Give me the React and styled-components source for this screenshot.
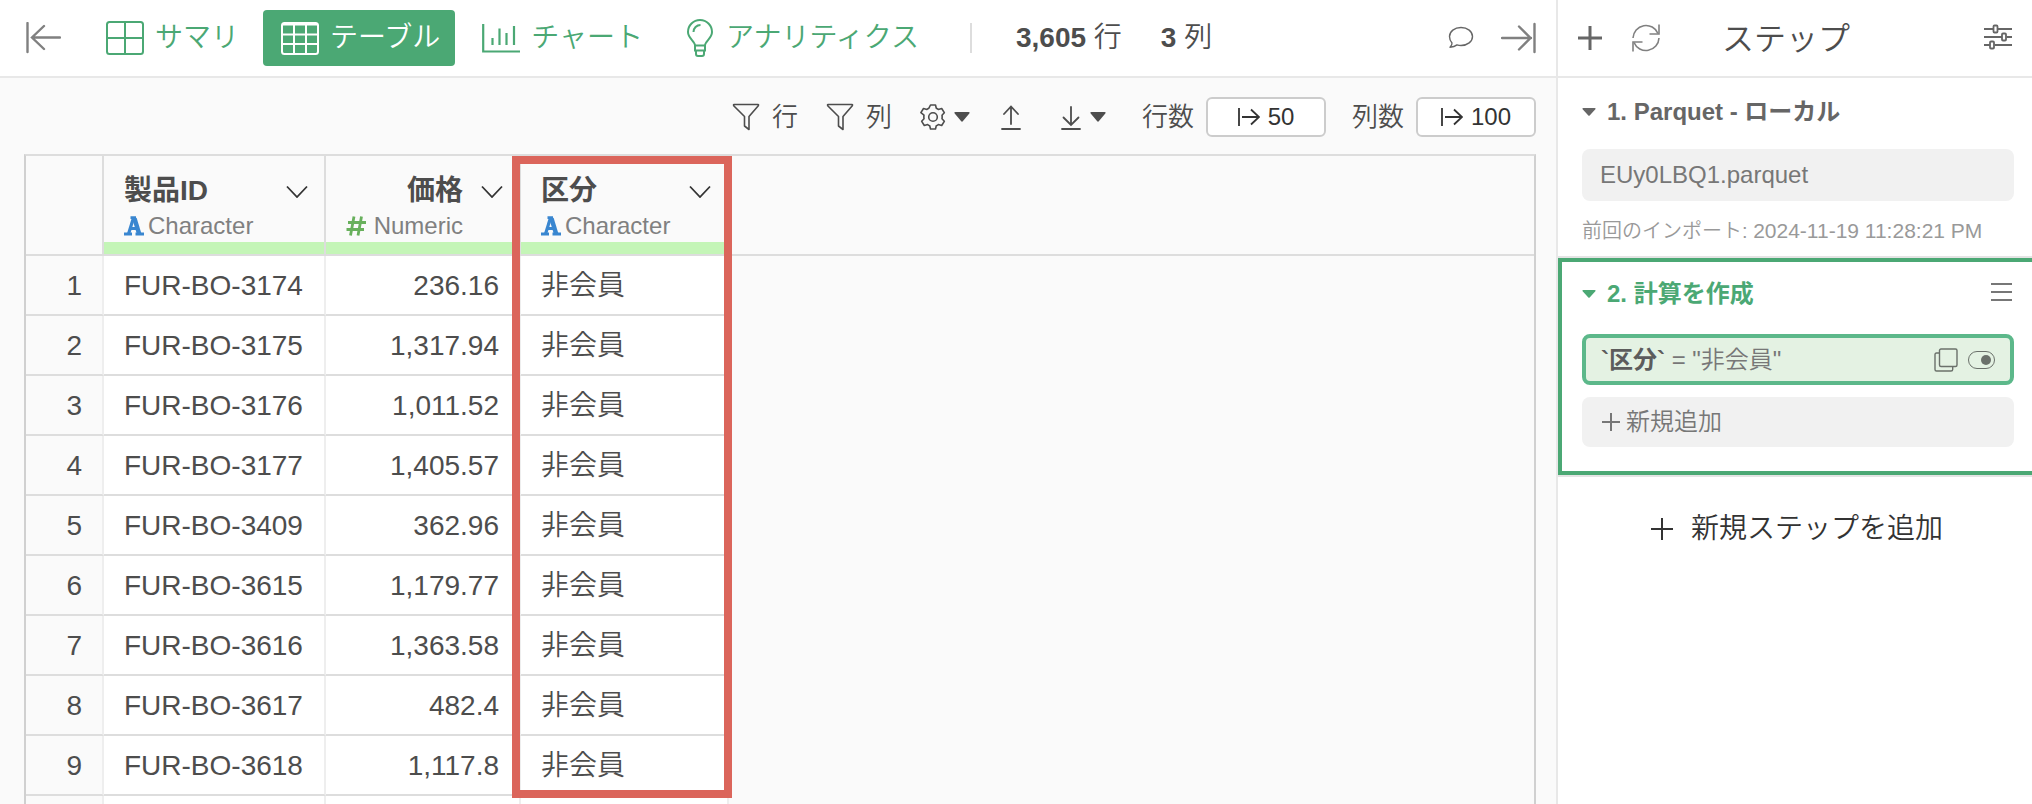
import { useState } from "react";
import styled, { createGlobalStyle } from "styled-components";

/* ---------------- STYLES ---------------- */

const GlobalStyle = createGlobalStyle`
  * {
    box-sizing: border-box;
  }

  body {
    margin: 0;
    background-color: #ffffff;
  }

  body, button, input {
    font-family: "Liberation Sans", "Noto Sans CJK JP", sans-serif;
    font-weight: 350;
  }

  b {
    font-weight: 700;
  }

  button {
    margin: 0;
    padding: 0;
    border: 0;
    background: none;
    color: inherit;
    cursor: pointer;
  }

  svg {
    display: block;
    flex-shrink: 0;
  }
`;

const Container = styled.div`
  display: flex;
  height: 100vh;
  overflow: hidden;
  color: #4d4d4d;
`;

const Main = styled.main`
  flex: 1;
  min-width: 0;
  display: flex;
  flex-direction: column;
  background-color: #fafafa;
`;

const TopBar = styled.header`
  display: flex;
  align-items: center;
  height: 78px;
  flex-shrink: 0;
  padding: 0 20px 0 26px;
  background-color: #ffffff;
  border-bottom: 2px solid #e8e8e8;
`;

const IconButton = styled.button`
  display: flex;
  align-items: center;
  gap: ${({ $gap }) => $gap || 0}px;
  color: ${({ $color }) => $color || "#4d4d4d"};
`;

const Tabs = styled.nav`
  display: flex;
  gap: 9px;
  margin-left: 27px;
`;

const Tab = styled.button`
  display: flex;
  align-items: center;
  gap: 11px;
  height: 56px;
  padding: 0 15px 0 18px;
  border-radius: 4px;
  font-size: 28px;
  line-height: 40px;
  white-space: nowrap;
  color: ${({ $active }) => ($active ? "#ffffff" : "#4ba874")};
  background-color: ${({ $active }) => ($active ? "#4ba874" : "transparent")};
`;

const Counts = styled.div`
  display: flex;
  align-items: center;
  gap: 39px;
  height: 30px;
  margin-left: 36px;
  padding-left: 44px;
  border-left: 2px solid #dddddd;
  font-size: 28px;
  line-height: 40px;
  white-space: nowrap;
`;

const TopActions = styled.div`
  display: flex;
  align-items: center;
  gap: 27px;
  margin-left: auto;
`;

const ToolBar = styled.div`
  display: flex;
  align-items: center;
  justify-content: flex-end;
  gap: 28px;
  height: 76px;
  flex-shrink: 0;
  padding: 2px 20px 0 24px;
`;

const FilterButton = styled(IconButton)`
  gap: 12px;
  font-size: 26px;
  line-height: 40px;
`;

const Sizes = styled.div`
  display: flex;
  gap: 26px;
  margin-left: 8px;
`;

const SizeField = styled.div`
  display: flex;
  align-items: center;
  gap: 12px;
  font-size: 26px;
  line-height: 40px;
  white-space: nowrap;
`;

const SizeButton = styled.button`
  display: flex;
  align-items: center;
  justify-content: center;
  gap: 8px;
  width: 120px;
  height: 40px;
  border: 2px solid #cccccc;
  border-radius: 6px;
  background-color: #ffffff;
  color: #333333;
  font-size: 24px;
`;

const GridWrap = styled.div`
  flex: 1;
  min-height: 0;
  margin: 0 20px 0 24px;
  overflow: hidden;
  border: 2px solid #dddddd;
  border-left-color: #d0d0d0;
  border-right-color: #d0d0d0;
  border-bottom: 0;
`;

const Grid = styled.table`
  width: 100%;
  table-layout: fixed;
  border-collapse: separate;
  border-spacing: 0;
`;

const Col = styled.col`
  width: ${({ $width }) => $width};
`;

const HeadCell = styled.th`
  position: relative;
  height: 100px;
  padding: 0;
  vertical-align: top;
  text-align: left;
  font-weight: 350;
  border-right: ${({ $last }) => ($last ? 0 : 2)}px solid #dddddd;
  border-bottom: 2px solid #dddddd;
`;

const HeadBody = styled.div`
  display: flex;
  flex-direction: column;
  height: 98px;
  padding: 15px 16px 0 20px;
  border-bottom: 12px solid #c4f5b7;
`;

const HeadTitle = styled.div`
  display: flex;
  align-items: center;
  justify-content: ${({ $right }) => ($right ? "flex-end" : "space-between")};
  gap: 18px;
  font-size: 28px;
  font-weight: 700;
  line-height: 40px;
`;

const HeadType = styled.div`
  display: flex;
  align-items: center;
  gap: ${({ $right }) => ($right ? 8 : 4)}px;
  padding-right: ${({ $right }) => ($right ? 40 : 0)}px;
  justify-content: ${({ $right }) => ($right ? "flex-end" : "flex-start")};
  color: #808080;
  font-size: 24px;
  line-height: 30px;
`;

const RowNumber = styled.th`
  height: 60px;
  padding: 2px 20px 0 0;
  text-align: right;
  font-size: 28px;
  line-height: 40px;
  font-weight: 350;
  border-right: 2px solid #eeeeee;
  border-bottom: 2px solid #dddddd;
`;

const Cell = styled.td`
  height: 60px;
  padding: 2px 20px 0;
  font-size: 28px;
  line-height: 40px;
  white-space: nowrap;
  text-align: ${({ $right }) => ($right ? "right" : "left")};
  background-color: #ffffff;
  border-right: 2px solid #eeeeee;
  border-bottom: 2px solid #dddddd;
`;

const Highlight = styled.span`
  position: absolute;
  z-index: 2;
  top: 0;
  left: -9px;
  right: -5px;
  height: 642px;
  border: 8px solid #db655b;
  pointer-events: none;
`;

const StepPanel = styled.aside`
  width: 476px;
  flex-shrink: 0;
  border-left: 2px solid #e8e8e8;
  background-color: #ffffff;
`;

const PanelHeader = styled.header`
  display: flex;
  align-items: center;
  gap: 30px;
  height: 78px;
  padding: 0 20px;
  border-bottom: 2px solid #e8e8e8;
`;

const PanelTitle = styled.h1`
  flex: 1;
  margin: 0;
  padding: 2px 0 0 32px;
  font-size: 32px;
  font-weight: 350;
  line-height: 40px;
`;

const Step = styled.section`
  padding: ${({ $active }) => ($active ? "12px 18px 24px 20px" : "14px 18px 10px 24px")};
  border: 0 solid #4ba874;
  border-width: ${({ $active }) => ($active ? "4px 0 4px 4px" : "0")};
  box-shadow: 0 2px 0 #e4e4e4;
  margin-bottom: 2px;
`;

const StepHeading = styled.h2`
  display: flex;
  align-items: center;
  gap: 11px;
  margin: 0;
  height: 40px;
  color: ${({ $active }) => ($active ? "#4ba874" : "#666666")};
  font-size: 24px;
  font-weight: 700;
  line-height: 40px;
`;

const MenuButton = styled(IconButton)`
  margin-left: auto;
  padding: 0 2px 4px 0;
`;

const SourceBox = styled.button`
  display: block;
  width: 100%;
  height: 52px;
  margin-top: 17px;
  padding: 0 18px;
  border-radius: 8px;
  background-color: #f1f1f1;
  color: #777777;
  font-size: 24px;
  text-align: left;
`;

const ImportInfo = styled.p`
  margin: 16px 0 0;
  padding-bottom: 1px;
  color: #999999;
  font-size: 20px;
  line-height: 28px;
  white-space: nowrap;

  time {
    font-size: 21px;
  }
`;

const Formula = styled.div`
  display: flex;
  align-items: center;
  gap: 10px;
  height: 51px;
  margin-top: 20px;
  padding: 0 15px;
  border: 4px solid #5cb88a;
  border-radius: 8px;
  background-color: #e4f2e3;
  color: #777777;
  font-size: 24px;
  line-height: 36px;
`;

const FormulaText = styled.span`
  flex: 1;

  b {
    color: #5c5c5c;
  }
`;

const Toggle = styled.input`
  appearance: none;
  display: flex;
  align-items: center;
  justify-content: ${({ checked }) => (checked ? "flex-end" : "flex-start")};
  width: 27px;
  height: 18px;
  margin: 0;
  padding: 0 3px;
  border: 1px solid #6b716b;
  border-radius: 9px;
  cursor: pointer;

  &::before {
    content: "";
    width: 10px;
    height: 10px;
    border-radius: 5px;
    background-color: #6b716b;
  }
`;

const AddBox = styled.button`
  display: flex;
  align-items: center;
  gap: 6px;
  width: 100%;
  height: 50px;
  margin-top: 12px;
  padding: 0 20px;
  border-radius: 8px;
  background-color: #f1f1f1;
  color: #777777;
  font-size: 24px;
  line-height: 36px;
`;

const AddStep = styled.button`
  display: flex;
  align-items: center;
  justify-content: center;
  gap: 18px;
  width: 100%;
  margin-top: 34px;
  padding-left: 4px;
  color: #333333;
  font-size: 28px;
  line-height: 40px;
`;

/* ---------------- ICONS ---------------- */

const CollapseIcon = ({ flip }) => (
  <svg width="35" height="32" viewBox="0 0 35 32" fill="none" stroke="#808080" strokeWidth="2.4" strokeLinecap="round">
    {flip ? (
      <path d="M33.5 2v28M1 16h29M18 4.500l11.500 11.500L18 27.500" />
    ) : (
      <path d="M1.500 1v29M34 15.500H7M18 4L6 15.500L18 27" />
    )}
  </svg>
);

const SummaryIcon = () => (
  <svg width="38" height="34" viewBox="0 0 38 34" fill="none" stroke="currentColor" strokeWidth="2">
    <rect x="1" y="1" width="36" height="32" rx="2.500" />
    <path d="M19 1v32M1 17h36" />
  </svg>
);

const TableIcon = () => (
  <svg width="38" height="34" viewBox="0 0 38 34" fill="none" stroke="currentColor" strokeWidth="2">
    <rect x="1" y="2" width="36" height="31" rx="2.500" />
    <path d="M1 3.500h36M13 2v31M25 2v31M1 13.500h36M1 23h36" />
  </svg>
);

const ChartIcon = () => (
  <svg width="38" height="30" viewBox="0 0 38 30" fill="none" stroke="currentColor" strokeWidth="2.2">
    <path d="M1.200 1v27.500H38M10.500 15v7M17.500 5.500v16.500M24.500 10v12M32 3v19" />
  </svg>
);

const BulbIcon = () => (
  <svg width="30" height="38" viewBox="0 0 30 38" fill="none" stroke="currentColor" strokeWidth="2">
    <path d="M10 26.500c0-4.500-7-7-7-13.500a12 12 0 0 1 24 0c0 6.500-7 9-7 13.500zM10 26.500v5h10v-5M11 31.500v3.500q0 2 2 2h4q2 0 2-2v-3.500" />
    <path d="M8.500 13a7 7 0 0 1 7-7" />
  </svg>
);

const ChatIcon = () => (
  <svg width="26" height="24" viewBox="0 0 26 24" fill="none" stroke="#666666" strokeWidth="1.4" strokeLinejoin="round">
    <path d="M13 1.500c6.500 0 11.500 4 11.500 9s-5 9-11.500 9c-1.500 0-2.700-.2-4-.6c-2 1.700-4.200 2.300-7 2.300c1.300-1.200 2.200-2.700 2-4.300C2.400 15.200 1.500 13 1.500 10.500c0-5 5-9 11.500-9z" />
  </svg>
);

const FunnelIcon = () => (
  <svg width="28" height="28" viewBox="0 0 28 28" fill="none" stroke="currentColor" strokeWidth="1.600" strokeLinejoin="round">
    <path d="M2 1.500h24q.8 0 .3 1.200L17 13.500v13l-4.500-3.500v-9.500L1.700 2.700Q1.300 1.500 2 1.500z" />
  </svg>
);

const GearIcon = () => (
  <svg width="26" height="26" viewBox="0 0 26 26" fill="none" stroke="currentColor" strokeWidth="1.600" strokeLinejoin="round">
    <circle cx="13" cy="13" r="4.300" />
    <path d="M10.500 1h5l.8 3.200q1 .4 2 1.200l3.400-.9l2.600 4.200l-2.300 2.500q.3 1.800 0 3.600l2.300 2.500l-2.600 4.200l-3.400-.9q-1 .8-2 1.200l-.8 3.200h-5l-.8-3.200q-1-.4-2-1.200l-3.400.9l-2.600-4.200l2.300-2.500q-.3-1.800 0-3.600L.9 8.700l2.600-4.200l3.400.9q1-.8 2-1.200z" />
  </svg>
);

const CaretIcon = ({ width, height }) => (
  <svg width={width} height={height} viewBox="0 0 16 10" preserveAspectRatio="none">
    <path d="M1.500 0h13q1.800 0 .8 1.500L9 9q-1 1.300-2 0L.7 1.500Q-.3 0 1.500 0z" fill="currentColor" />
  </svg>
);

const UploadIcon = () => (
  <svg width="30" height="28" viewBox="0 0 30 28" fill="none" stroke="currentColor" strokeWidth="1.800" strokeLinecap="round">
    <path d="M13 21V4M6 11l7-7.500l7 7.500M4 26h18" />
  </svg>
);

const DownloadIcon = () => (
  <svg width="30" height="28" viewBox="0 0 30 28" fill="none" stroke="currentColor" strokeWidth="1.800" strokeLinecap="round">
    <path d="M15 4v17.500M7.500 14.500l7.500 7.500l7.500-7.500M6 26h18" />
  </svg>
);

const LimitIcon = () => (
  <svg width="22" height="20" viewBox="0 0 22 20" fill="none" stroke="currentColor" strokeWidth="1.800">
    <path d="M1 1v18M4 10h17M13 2.500l8 7.500l-8 7.500" />
  </svg>
);

const ChevronIcon = () => (
  <svg width="22" height="14" viewBox="0 0 22 14" fill="none" stroke="#333333" strokeWidth="1.800">
    <path d="M1 2.500l10 10.500l10-10.500" />
  </svg>
);

const CharacterIcon = () => (
  <svg width="20" height="20" viewBox="0 0 20 20" fill="none" stroke="#3986d0">
    <path d="M4.500 18L9.300 2.500" strokeWidth="3.200" />
    <path d="M15.200 18L10.500 2.500" strokeWidth="4.400" />
    <path d="M6.500 1.700h5.500M6 12.500h8" strokeWidth="2.800" />
    <path d="M0 18h8M11.500 18H20" strokeWidth="3.200" />
  </svg>
);

const NumericIcon = () => (
  <svg width="20" height="20" viewBox="0 0 20 20" fill="none" stroke="#68b05c" strokeWidth="2.800">
    <path d="M8 .5L4.500 19.500M15.500 .5L12 19.500M2 6.500h18M.5 13.500H18" />
  </svg>
);

const PlusIcon = ({ size, weight }) => (
  <svg width={size} height={size} viewBox={`0 0 ${size} ${size}`} fill="none" stroke="currentColor" strokeWidth={weight}>
    <path d={`M${size / 2} 0v${size}M0 ${size / 2}h${size}`} />
  </svg>
);

const RefreshIcon = () => (
  <svg width="28" height="28" viewBox="0 0 28 28" fill="none" stroke="#808080" strokeWidth="1.600">
    <path d="M1 14A13 13 0 0 1 26 9.500M27 14A13 13 0 0 1 2 18.500" />
    <path d="M27 .5v9.500h-9.500M1 27.500V18h9.500" />
  </svg>
);

const SlidersIcon = () => (
  <svg width="28" height="28" viewBox="0 0 28 28" fill="none" stroke="#666666" strokeWidth="1.800">
    <path d="M0 5h9.500M14 5h14M0 13h18M22.500 13H28M0 21h6M10.500 21H28" />
    <rect x="9.500" y="1.500" width="4" height="7" rx="1" />
    <rect x="18" y="9.500" width="4" height="7" rx="1" />
    <rect x="6" y="17.500" width="4" height="7" rx="1" />
  </svg>
);

const MenuIcon = () => (
  <svg width="21" height="20" viewBox="0 0 21 20" fill="none" stroke="#777777" strokeWidth="1.800">
    <path d="M0 2h21M0 10h21M0 18h21" />
  </svg>
);

const CopyIcon = () => (
  <svg width="24" height="24" viewBox="0 0 24 24" fill="none" stroke="#6b716b" strokeWidth="1.400">
    <rect x="5.500" y="1" width="17.500" height="17.500" rx="1.500" />
    <path d="M5.500 5H2.500Q1 5 1 6.500V21.500Q1 23 2.500 23H17Q18.700 23 18.700 21.500V18.500" />
  </svg>
);

/* ---------------- DATA ---------------- */

const tabs = [
  { id: "summary", label: "サマリ", icon: <SummaryIcon /> },
  { id: "table", label: "テーブル", icon: <TableIcon /> },
  { id: "chart", label: "チャート", icon: <ChartIcon /> },
  { id: "analytics", label: "アナリティクス", icon: <BulbIcon /> },
];

const rows = [
  ["FUR-BO-3174", "236.16"],
  ["FUR-BO-3175", "1,317.94"],
  ["FUR-BO-3176", "1,011.52"],
  ["FUR-BO-3177", "1,405.57"],
  ["FUR-BO-3409", "362.96"],
  ["FUR-BO-3615", "1,179.77"],
  ["FUR-BO-3616", "1,363.58"],
  ["FUR-BO-3617", "482.4"],
  ["FUR-BO-3618", "1,117.8"],
];

/* ---------------- COMPONENTS ---------------- */

const ColumnHead = ({ name, type, marked }) => {
  const numeric = type === "Numeric";
  return (
    <HeadCell scope="col">
      <HeadBody>
        <HeadTitle $right={numeric}>
          {name}
          <IconButton aria-label={name}><ChevronIcon /></IconButton>
        </HeadTitle>
        <HeadType $right={numeric}>
          {numeric ? <NumericIcon /> : <CharacterIcon />}
          {type}
        </HeadType>
      </HeadBody>
      {marked && <Highlight />}
    </HeadCell>
  );
};

const DataGrid = () => (
  <GridWrap>
    <Grid>
      <colgroup>
        <Col $width="78px" />
        <Col $width="222px" />
        <Col $width="195px" />
        <Col $width="208px" />
        <Col $width="auto" />
      </colgroup>
      <thead>
        <tr>
          <HeadCell />
          <ColumnHead name="製品ID" type="Character" />
          <ColumnHead name="価格" type="Numeric" />
          <ColumnHead name="区分" type="Character" marked />
          <HeadCell $last />
        </tr>
      </thead>
      <tbody>
        {rows.map(([id, price], i) => (
          <tr key={id}>
            <RowNumber scope="row">{i + 1}</RowNumber>
            <Cell>{id}</Cell>
            <Cell $right>{price}</Cell>
            <Cell>非会員</Cell>
          </tr>
        ))}
        <tr>
          <RowNumber />
          <Cell />
          <Cell />
          <Cell />
        </tr>
      </tbody>
    </Grid>
  </GridWrap>
);

const App = () => {
  const [activeTab, setActiveTab] = useState("table");
  const [enabled, setEnabled] = useState(true);

  return (
    <Container lang="ja">
      <GlobalStyle />
      <Main>
        <TopBar>
          <IconButton aria-label="左を閉じる"><CollapseIcon /></IconButton>
          <Tabs>
            {tabs.map((tab) => (
              <Tab key={tab.id} $active={activeTab === tab.id} onClick={() => setActiveTab(tab.id)}>
                {tab.icon}
                {tab.label}
              </Tab>
            ))}
          </Tabs>
          <Counts>
            <span><b>3,605</b> 行</span>
            <span><b>3</b> 列</span>
          </Counts>
          <TopActions>
            <IconButton aria-label="コメント"><ChatIcon /></IconButton>
            <IconButton aria-label="右を閉じる"><CollapseIcon flip /></IconButton>
          </TopActions>
        </TopBar>

        <ToolBar>
          <FilterButton><FunnelIcon />行</FilterButton>
          <FilterButton><FunnelIcon />列</FilterButton>
          <IconButton $gap={8} aria-label="設定">
            <GearIcon />
            <CaretIcon width="16" height="10" />
          </IconButton>
          <IconButton aria-label="アップロード"><UploadIcon /></IconButton>
          <IconButton $gap={4} aria-label="ダウンロード">
            <DownloadIcon />
            <CaretIcon width="16" height="10" />
          </IconButton>
          <Sizes>
            <SizeField>
              <label htmlFor="row-limit">行数</label>
              <SizeButton id="row-limit"><LimitIcon />50</SizeButton>
            </SizeField>
            <SizeField>
              <label htmlFor="col-limit">列数</label>
              <SizeButton id="col-limit"><LimitIcon />100</SizeButton>
            </SizeField>
          </Sizes>
        </ToolBar>

        <DataGrid />
      </Main>

      <StepPanel>
        <PanelHeader>
          <IconButton $color="#666666" aria-label="追加"><PlusIcon size={24} weight={3} /></IconButton>
          <IconButton aria-label="更新"><RefreshIcon /></IconButton>
          <PanelTitle>ステップ</PanelTitle>
          <IconButton aria-label="表示設定"><SlidersIcon /></IconButton>
        </PanelHeader>

        <Step>
          <StepHeading>
            <CaretIcon width="14" height="8" />
            1. Parquet - ローカル
          </StepHeading>
          <SourceBox>EUy0LBQ1.parquet</SourceBox>
          <ImportInfo>
            前回のインポート: <time>2024-11-19 11:28:21 PM</time>
          </ImportInfo>
        </Step>

        <Step $active>
          <StepHeading $active>
            <CaretIcon width="14" height="8" />
            2. 計算を作成
            <MenuButton aria-label="メニュー"><MenuIcon /></MenuButton>
          </StepHeading>
          <Formula>
            <FormulaText><b>`区分`</b> = "非会員"</FormulaText>
            <IconButton aria-label="コピー"><CopyIcon /></IconButton>
            <Toggle
              type="checkbox"
              aria-label="有効"
              checked={enabled}
              onChange={(e) => setEnabled(e.target.checked)}
            />
          </Formula>
          <AddBox><PlusIcon size={18} weight={2} />新規追加</AddBox>
        </Step>

        <AddStep><PlusIcon size={22} weight={2} />新規ステップを追加</AddStep>
      </StepPanel>
    </Container>
  );
};

export default App;
